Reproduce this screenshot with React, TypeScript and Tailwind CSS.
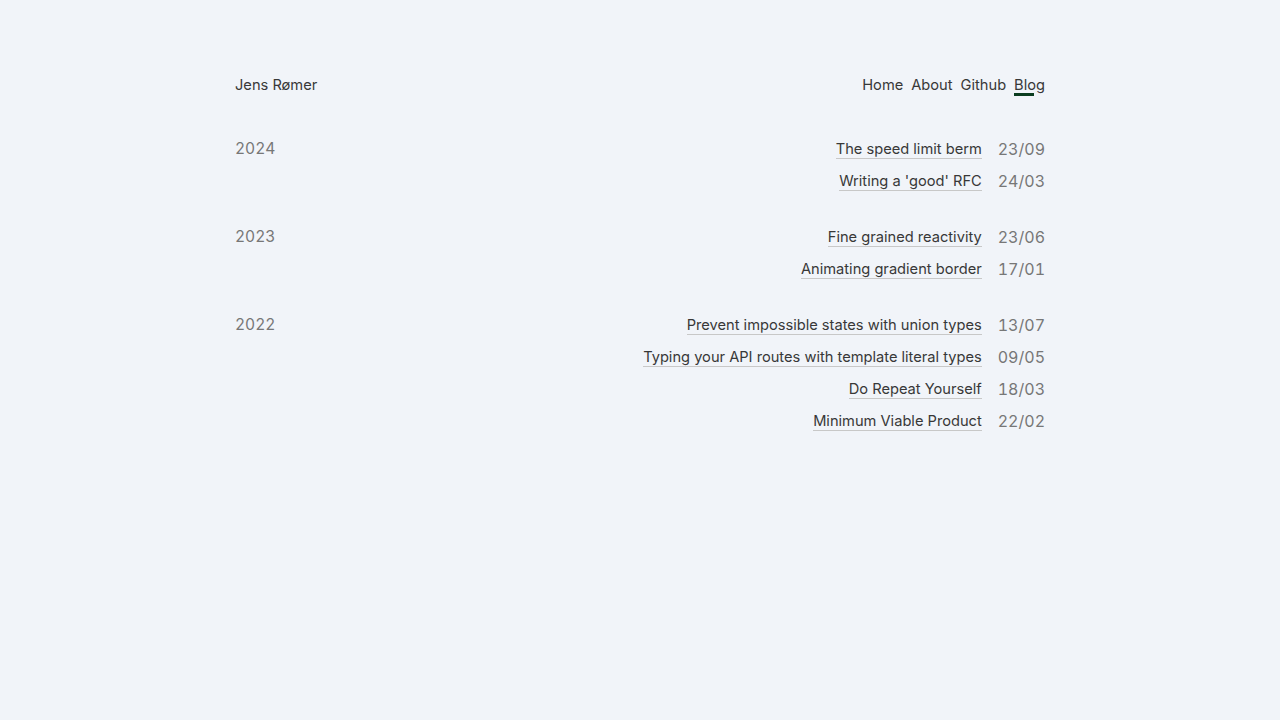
const POSTS: { year: string; items: { title: string; date: string }[] }[] = [
  {
    year: '2024',
    items: [
      { title: 'The speed limit berm', date: '23/09' },
      { title: "Writing a 'good' RFC", date: '24/03' },
    ],
  },
  {
    year: '2023',
    items: [
      { title: 'Fine grained reactivity', date: '23/06' },
      { title: 'Animating gradient border', date: '17/01' },
    ],
  },
  {
    year: '2022',
    items: [
      { title: 'Prevent impossible states with union types', date: '13/07' },
      { title: 'Typing your API routes with template literal types', date: '09/05' },
      { title: 'Do Repeat Yourself', date: '18/03' },
      { title: 'Minimum Viable Product', date: '22/02' },
    ],
  },
];

const NAV = ['Home', 'About', 'Github', 'Blog'];

export default function App() {
  return (
    <div className="min-h-screen bg-[#f1f4f9] font-['Inter',sans-serif] text-[14.65px] text-[#383838]">
      <div className="mx-auto w-[810px] pt-[73px]">
        <header className="flex h-6 items-center justify-between leading-6">
          <a href="#">Jens Rømer</a>
          <nav className="flex gap-2">
            {NAV.map((item) => (
              <a key={item} href="#" className="relative">
                {item}
                {item === 'Blog' && (
                  <span className="absolute bottom-[1px] left-0 h-[3px] w-5 bg-[#0b3d20]" />
                )}
              </a>
            ))}
          </nav>
        </header>

        <main className="mt-9 flex flex-col gap-6">
          {POSTS.map((group) => (
            <section key={group.year} className="flex justify-between">
              <div className="text-[15.6px] leading-8 text-[#777] tabular-nums">{group.year}</div>
              <ul className="flex flex-col items-end">
                {group.items.map((post) => (
                  <li key={post.title} className="flex h-8 items-center gap-4">
                    <a href="#" className="border-b border-[#c8c8c8] leading-[18px]">
                      {post.title}
                    </a>
                    <span className="text-base text-[#777] tabular-nums">{post.date}</span>
                  </li>
                ))}
              </ul>
            </section>
          ))}
        </main>
      </div>
    </div>
  );
}
